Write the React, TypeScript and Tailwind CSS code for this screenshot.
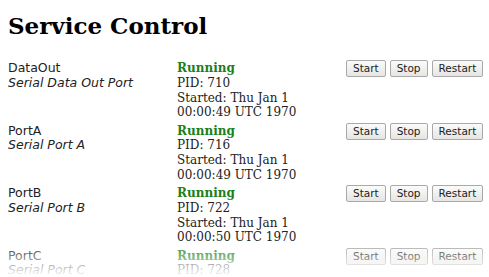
const SERVICES = [
  { name: "DataOut", desc: "Serial Data Out Port", pid: 710, started: "00:00:49" },
  { name: "PortA", desc: "Serial Port A", pid: 716, started: "00:00:49" },
  { name: "PortB", desc: "Serial Port B", pid: 722, started: "00:00:50" },
  { name: "PortC", desc: "Serial Port C", pid: 728, started: "00:00:50" },
];

function Btn({ label }: { label: string }) {
  return (
    <button className="h-[17px] rounded-[2px] border border-[#a9a9a9] bg-gradient-to-b from-[#fbfbfa] to-[#e6e5e2] px-[6px] text-[10.5px] leading-none text-[#222] [font-family:'DejaVu_Sans',sans-serif]">
      {label}
    </button>
  );
}

export default function App() {
  return (
    <div className="relative h-[277px] overflow-hidden bg-white px-2 text-black">
      <h1 className="pt-[14px] text-[23px] font-bold leading-[24px] [font-family:'DejaVu_Serif',serif]">
        Service Control
      </h1>
      <div className="mt-[23px]">
        {SERVICES.map((s) => (
          <div key={s.name} className="flex h-[62.5px] leading-[14.8px]">
            <div className="w-[169px] shrink-0 text-[12.5px] text-[#222] [font-family:'DejaVu_Sans',sans-serif]">
              <div>{s.name}</div>
              <div className="italic">{s.desc}</div>
            </div>
            <div className="w-[169px] shrink-0 text-[12px] text-[#222] [font-family:'DejaVu_Serif',serif]">
              <div className="font-bold text-[#1a7f1a]">Running</div>
              <div>PID: {s.pid}</div>
              <div>Started: Thu Jan 1</div>
              <div>{s.started} UTC 1970</div>
            </div>
            <div className="-mt-[1px] flex shrink-0 gap-[4px]">
              <Btn label="Start" />
              <Btn label="Stop" />
              <Btn label="Restart" />
            </div>
          </div>
        ))}
      </div>
      <div className="pointer-events-none absolute inset-x-0 bottom-0 h-[36px] bg-gradient-to-b from-white/0 to-white" />
    </div>
  );
}
